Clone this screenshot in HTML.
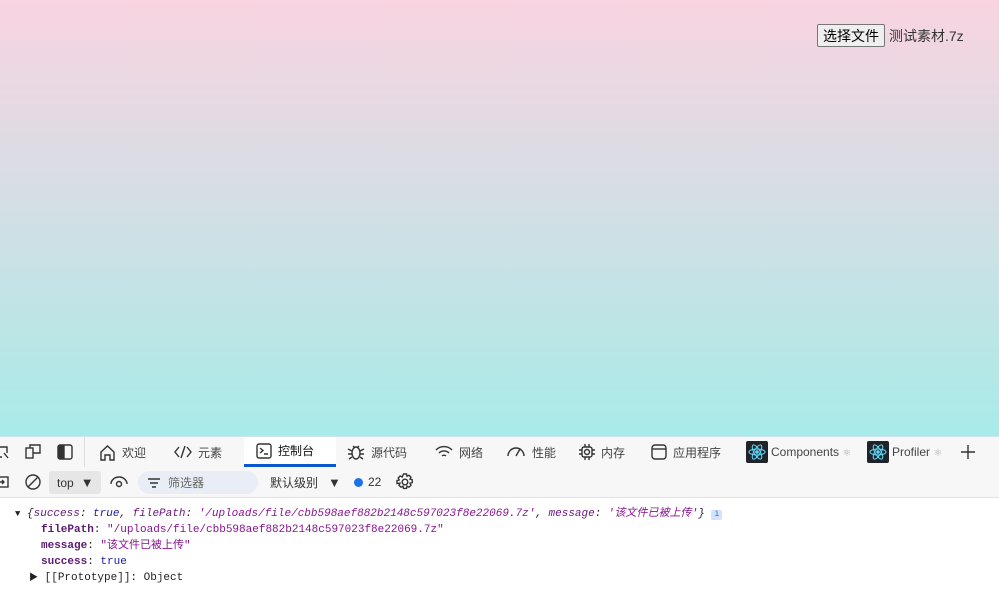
<!DOCTYPE html>
<html><head><meta charset="utf-8"><style>
*{margin:0;padding:0;box-sizing:border-box}
body{width:999px;height:590px;overflow:hidden;position:relative;font-family:"Liberation Sans","Noto Sans CJK SC",sans-serif;background:#fff}
.page{position:absolute;left:0;top:0;width:999px;height:436px;background:linear-gradient(#f9d4e1,#a8ebe8)}
.fi{position:absolute;left:817px;top:24px;font-size:14px;color:#333;display:flex;align-items:center}
.fi button{font:14px "Liberation Sans","Noto Sans CJK SC",sans-serif;padding:1px 5px;border:1px solid #767676;border-radius:2px;background:#efefef;color:#000;height:23px;margin-right:4px}
.tabs{position:absolute;top:436px;left:0;width:999px;height:31px;background:#f7f7f7;border-top:1px solid #cfe4f3;font-size:12px;color:#444}
.tb{position:absolute;top:467px;left:0;width:999px;height:31px;background:#f7f7f7;border-bottom:1px solid #d6e4f0;font-size:12px;color:#333}
.t{position:absolute;top:0;height:30px;display:flex;align-items:center;gap:6px;white-space:nowrap}
.act{background:#fff;border-bottom:3px solid #0b57d0}
svg{stroke:#333;fill:none;stroke-width:1.4}
.con{position:absolute;top:506px;left:0;font-family:"Liberation Mono","Noto Sans CJK SC",monospace;font-size:11px;line-height:16px;color:#222}
.l{position:absolute;white-space:nowrap}
.k{color:#6b1a80}.kb{color:#5b1a72;font-weight:bold}.s{color:#881391}.b{color:#1a1aa6}.i{font-style:italic}
.re{width:22px;height:22px;background:#20232a;border-radius:2px;display:flex;align-items:center;justify-content:center}
.ar{font-size:13px}
</style></head><body>
<div class="page"></div>
<div class="fi"><button>选择文件</button>测试素材.7z</div>

<div class="tabs">
 <div class="t" style="left:-4px"><svg width="14" height="14"><path d="M1 2h10v6M1 2v10h5M8 8l4 5"/></svg></div>
 <div class="t" style="left:25px"><svg width="16" height="16"><rect x="1" y="4" width="7" height="10"/><path d="M5 4V1h10v8h-7"/></svg></div>
 <div class="t" style="left:57px"><svg width="16" height="16"><rect x="1" y="1" width="14" height="14" rx="2"/><rect x="2" y="2" width="5" height="12" fill="#333"/></svg></div>
 <div style="position:absolute;left:84px;top:0;width:1px;height:30px;background:#ddd"></div>
 <div class="t" style="left:99px"><svg width="17" height="17"><path d="M2 8l6.5-6 6.5 6v8h-4v-5h-5v5h-4z"/></svg>欢迎</div>
 <div class="t" style="left:174px"><svg width="18" height="14"><path d="M5 2L1 7l4 5M13 2l4 5-4 5M11 1L7 13"/></svg>元素</div>
 <div class="t act" style="left:244px;width:92px;padding-left:12px;color:#111"><svg width="16" height="16"><rect x="1" y="1" width="14" height="14" rx="2"/><path d="M4 5l3 2.5L4 10M8 11h4"/></svg>控制台</div>
 <div class="t" style="left:347px"><svg width="18" height="18"><ellipse cx="9" cy="10" rx="4" ry="6"/><path d="M1 6l4 2M17 6l-4 2M1 11h4M17 11h-4M2 16l3-2M16 16l-3-2M6 3l2 2M12 3l-2 2"/></svg>源代码</div>
 <div class="t" style="left:435px"><svg width="18" height="14"><path d="M1 5a11 11 0 0 1 16 0M4 8a7 7 0 0 1 10 0M7 11a3 3 0 0 1 4 0"/></svg>网络</div>
 <div class="t" style="left:506px"><svg width="20" height="14"><path d="M2 11a8 8 0 0 1 16 0M10 11l4-7"/></svg>性能</div>
 <div class="t" style="left:579px"><svg width="16" height="16"><rect x="3" y="3" width="10" height="10" rx="2"/><circle cx="8" cy="8" r="2.5"/><path d="M6 0v3M10 0v3M6 13v3M10 13v3M0 6h3M0 10h3M13 6h3M13 10h3"/></svg>内存</div>
 <div class="t" style="left:651px"><svg width="16" height="16"><rect x="1" y="1" width="14" height="14" rx="3"/><path d="M1 5h14"/></svg>应用程序</div>
 <div class="t" style="left:746px"><div class="re"><svg width="18" height="18" style="stroke:#61dafb;stroke-width:1"><ellipse cx="9" cy="9" rx="8" ry="3"/><ellipse cx="9" cy="9" rx="8" ry="3" transform="rotate(60 9 9)"/><ellipse cx="9" cy="9" rx="8" ry="3" transform="rotate(120 9 9)"/><circle cx="9" cy="9" r="1.3" fill="#61dafb"/></svg></div><span style="margin-left:-3px">Components <span style="color:#aaa;font-size:10px">⚛</span></span></div>
 <div class="t" style="left:867px"><div class="re"><svg width="18" height="18" style="stroke:#61dafb;stroke-width:1"><ellipse cx="9" cy="9" rx="8" ry="3"/><ellipse cx="9" cy="9" rx="8" ry="3" transform="rotate(60 9 9)"/><ellipse cx="9" cy="9" rx="8" ry="3" transform="rotate(120 9 9)"/><circle cx="9" cy="9" r="1.3" fill="#61dafb"/></svg></div><span style="margin-left:-3px">Profiler <span style="color:#aaa;font-size:10px">⚛</span></span></div>
 <div class="t" style="left:960px"><svg width="16" height="16"><path d="M8 1v14M1 8h14"/></svg></div>
</div>

<div class="tb">
 <div class="t" style="left:-5px"><svg width="14" height="14"><rect x="1" y="2" width="12" height="10"/><path d="M3 7h6M7 5l2 2-2 2"/></svg></div>
 <div class="t" style="left:25px"><svg width="16" height="16"><circle cx="8" cy="8" r="7"/><path d="M3 13L13 3"/></svg></div>
 <div class="t" style="left:49px;top:4px;height:23px;width:52px;background:#e6e6e6;border-radius:3px;padding-left:8px;gap:7px">top<span class="ar">▼</span></div>
 <div class="t" style="left:110px"><svg width="18" height="12"><path d="M1 8a8 7 0 0 1 16 0"/><circle cx="9" cy="8" r="2.5"/></svg></div>
 <div class="t" style="left:138px;top:4px;height:23px;width:120px;background:#e9eef6;border-radius:12px;padding-left:10px;gap:8px;color:#666"><svg width="12" height="10"><path d="M0 1h12M2 5h8M4 9h4"/></svg>筛选器</div>
 <div class="t" style="left:270px">默认级别 <span class="ar" style="margin-left:4px">▼</span></div>
 <div class="t" style="left:354px;gap:5px"><span style="width:9px;height:9px;border-radius:50%;background:#1a73e8;display:inline-block"></span>22</div>
 <div class="t" style="left:396px"><svg width="18" height="18"><circle cx="9" cy="9" r="2.8"/><path d="M7.5 1h3l.5 2.2 2-1 2 2-1 2 2.2.5v3l-2.2.5 1 2-2 2-2-1-.5 2.2h-3l-.5-2.2-2 1-2-2 1-2L1 10.5v-3l2.2-.5-1-2 2-2 2 1z"/></svg></div>
</div>

<div class="con">
 <div class="l i" style="left:15px;top:0"><span style="font-style:normal;font-size:9px">▼</span> <span>{</span><span class="k">success</span>: <span class="b">true</span>, <span class="k">filePath</span>: <span class="s">'/uploads/file/cbb598aef882b2148c597023f8e22069.7z'</span>, <span class="k">message</span>: <span class="s">'该文件已被上传'</span>} <span style="display:inline-block;width:11px;height:10px;background:#d3e3fd;border-radius:2px;font-size:8px;text-align:center;line-height:10px;color:#1a73e8;font-style:normal">i</span></div>
 <div class="l" style="left:41px;top:16px"><span class="kb">filePath</span>: <span class="s">"/uploads/file/cbb598aef882b2148c597023f8e22069.7z"</span></div>
 <div class="l" style="left:41px;top:32px"><span class="kb">message</span>: <span class="s">"该文件已被上传"</span></div>
 <div class="l" style="left:41px;top:48px"><span class="kb">success</span>: <span class="b">true</span></div>
 <div class="l" style="left:29px;top:64px"><span style="font-size:9px">▶</span> [[Prototype]]: Object</div>
</div>
</body></html>
